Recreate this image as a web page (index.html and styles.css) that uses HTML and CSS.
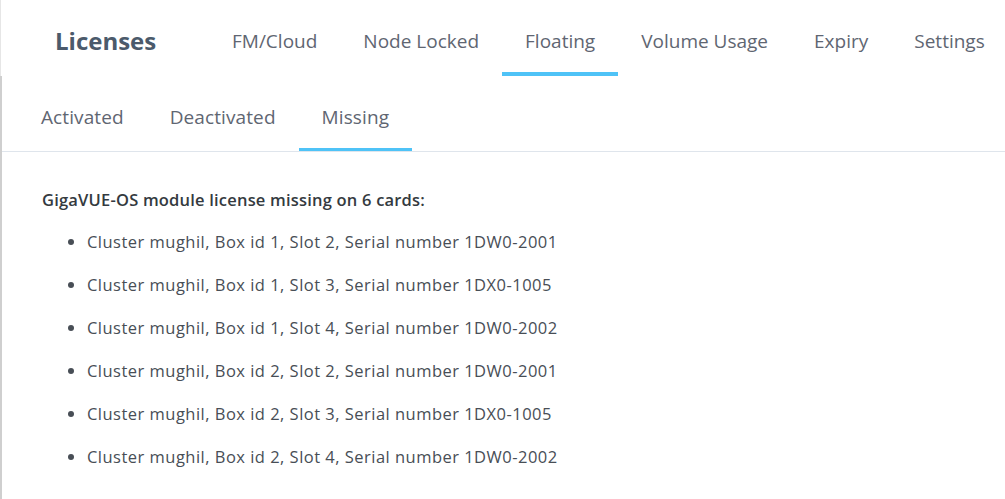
FILE: index.html
```html
<!DOCTYPE html>
<html>
<head>
<meta charset="utf-8">
<link rel="stylesheet" href="styles.css">
</head>
<body>
<div class="page">
  <header class="topbar">
    <div class="title">Licenses</div>
    <nav class="tabs">
      <div class="tab">FM/Cloud</div>
      <div class="tab">Node Locked</div>
      <div class="tab active">Floating</div>
      <div class="tab">Volume Usage</div>
      <div class="tab">Expiry</div>
      <div class="tab">Settings</div>
    </nav>
  </header>
  <main class="main">
    <nav class="subtabs">
      <div class="subtab">Activated</div>
      <div class="subtab">Deactivated</div>
      <div class="subtab active">Missing</div>
    </nav>
    <section class="content">
      <h2 class="heading">GigaVUE-OS module license missing on 6 cards:</h2>
      <ul class="cards">
        <li>Cluster mughil, Box id 1, Slot 2, Serial number 1DW0-2001</li>
        <li>Cluster mughil, Box id 1, Slot 3, Serial number 1DX0-1005</li>
        <li>Cluster mughil, Box id 1, Slot 4, Serial number 1DW0-2002</li>
        <li>Cluster mughil, Box id 2, Slot 2, Serial number 1DW0-2001</li>
        <li>Cluster mughil, Box id 2, Slot 3, Serial number 1DX0-1005</li>
        <li>Cluster mughil, Box id 2, Slot 4, Serial number 1DW0-2002</li>
      </ul>
    </section>
  </main>
</div>
</body>
</html>
```
FILE: styles.css
```css
html, body {
  margin: 0;
  padding: 0;
  background: #ffffff;
}
body {
  font-family: "Open Sans", "Noto Sans", "Liberation Sans", sans-serif;
  color: #5f6672;
}
.page {
  width: 1005px;
  height: 499px;
  overflow: hidden;
}
.topbar {
  display: flex;
  height: 76px;
  border-left: 1px solid #e6e6e6;
  box-sizing: border-box;
  overflow: hidden;
}
.title {
  flex: none;
  padding: 25px 0 0 54px;
  width: 154px;
  font-size: 24px;
  line-height: 32px;
  font-weight: 700;
  color: #4b5a6b;
}
.tabs {
  flex: none;
  display: flex;
}
.tab {
  flex: none;
  padding: 28px 23px 0;
  font-size: 19px;
  letter-spacing: 0;
  line-height: 26px;
  box-sizing: border-box;
  height: 76px;
  border-bottom: 4px solid transparent;
  white-space: nowrap;
}
.tab.active {
  border-bottom-color: #4fc3f7;
}
.main {
  border-left: 2px solid #cfcfcf;
  height: 423px;
  box-sizing: border-box;
}
.subtabs {
  display: flex;
  padding-left: 16px;
  border-bottom: 1px solid #dfe5ec;
  height: 76px;
  box-sizing: border-box;
}
.subtab {
  padding: 28px 23px 0;
  font-size: 19px;
  letter-spacing: 0.1px;
  line-height: 26px;
  box-sizing: border-box;
  height: 75px;
  border-bottom: 3px solid transparent;
}
.subtab.active {
  border-bottom-color: #4fc3f7;
}
.content {
  padding: 37px 0 0 40px;
}
.heading {
  margin: 0;
  font-size: 16.5px;
  letter-spacing: 0.2px;
  line-height: 22px;
  font-weight: 600;
  color: #343a40;
}
.cards {
  margin: 20px 0 0;
  padding-left: 45px;
  font-size: 16.5px;
  letter-spacing: 0.48px;
  line-height: 22px;
  color: #484e56;
}
.cards li {
  margin-bottom: 21px;
}
```
